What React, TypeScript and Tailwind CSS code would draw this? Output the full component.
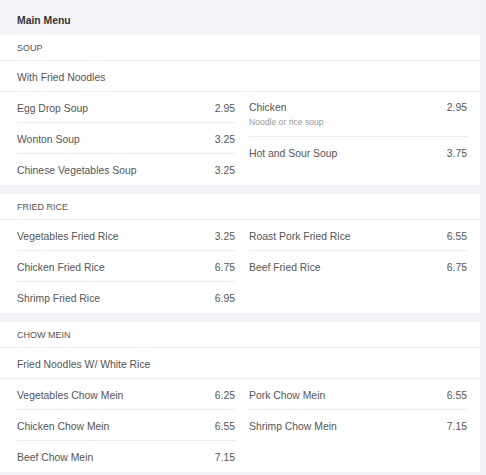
import React from "react";

type Item = { name: string; price: string; note?: string };

type Section = {
  title: string;
  sub?: string;
  left: Item[];
  right: Item[];
};

const sections: Section[] = [
  {
    title: "Soup",
    sub: "With Fried Noodles",
    left: [
      { name: "Egg Drop Soup", price: "2.95" },
      { name: "Wonton Soup", price: "3.25" },
      { name: "Chinese Vegetables Soup", price: "3.25" },
    ],
    right: [
      { name: "Chicken", price: "2.95", note: "Noodle or rice soup" },
      { name: "Hot and Sour Soup", price: "3.75" },
    ],
  },
  {
    title: "Fried Rice",
    left: [
      { name: "Vegetables Fried Rice", price: "3.25" },
      { name: "Chicken Fried Rice", price: "6.75" },
      { name: "Shrimp Fried Rice", price: "6.95" },
    ],
    right: [
      { name: "Roast Pork Fried Rice", price: "6.55" },
      { name: "Beef Fried Rice", price: "6.75" },
    ],
  },
  {
    title: "Chow Mein",
    sub: "Fried Noodles W/ White Rice",
    left: [
      { name: "Vegetables Chow Mein", price: "6.25" },
      { name: "Chicken Chow Mein", price: "6.55" },
      { name: "Beef Chow Mein", price: "7.15" },
    ],
    right: [
      { name: "Pork Chow Mein", price: "6.55" },
      { name: "Shrimp Chow Mein", price: "7.15" },
    ],
  },
];

const MenuColumn = ({ items }: { items: Item[] }) => (
  <div className="flex flex-col">
    {items.map((item, i) => (
      <div
        key={item.name}
        className={`flex justify-between ${item.note ? "h-[45px] pt-[9px]" : "h-[31px] items-center pt-[3px]"} ${
          i < items.length - 1 ? "border-b border-[#ececf0]" : ""
        }`}
      >
        <div className="flex flex-col">
          <span className="leading-[14px]">{item.name}</span>
          {item.note && <span className="mt-[2px] text-[8.6px] leading-[11px] text-[#9a9a9a]">{item.note}</span>}
        </div>
        <span className="leading-[14px]">{item.price}</span>
      </div>
    ))}
  </div>
);

export default function App() {
  return (
    <div className="min-h-screen bg-[#f2f2f6] font-['Liberation_Sans',Arial,sans-serif] text-[10.4px] text-[#555]">
      <div className="w-[480px]">
        <div className="flex h-[35px] items-center bg-[#f5f5f9] pl-[17px] pt-[6px] font-bold text-[#333]">Main Menu</div>

        {sections.map((s) => (
          <div key={s.title} className="mb-[9px] bg-white">
            <div className="flex h-[26px] items-center border-b border-[#ececf0] pl-[17px] pt-[2px] text-[9px] uppercase text-[#555]">
              {s.title}
            </div>
            {s.sub && (
              <div className="flex h-[31px] items-center border-b border-[#ececf0] pl-[17px] pt-[3px]">{s.sub}</div>
            )}
            <div className="grid grid-cols-[218px_218px] gap-x-[14px] pl-[17px]">
              <MenuColumn items={s.left} />
              <MenuColumn items={s.right} />
            </div>
          </div>
        ))}
      </div>
    </div>
  );
}
